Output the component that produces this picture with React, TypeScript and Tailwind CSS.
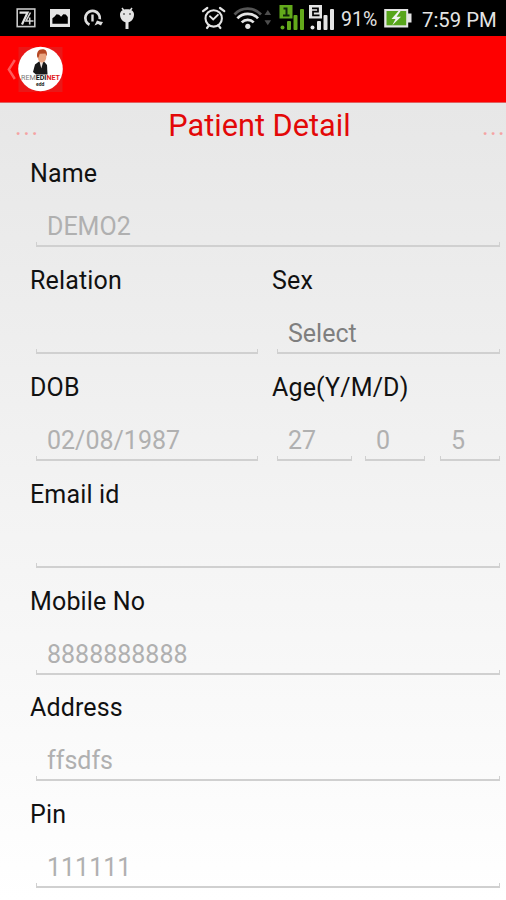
import React from 'react';

interface FieldProps {
  value?: string;
  className?: string;
  dark?: boolean;
}

const Label: React.FC<{ children: React.ReactNode }> = ({ children }) => (
  <div className="h-[44px] leading-[46px] text-[25px] tracking-[0.15px] text-[#111] whitespace-nowrap">{children}</div>
);

// Holo style input: text with a thin bracket line below
const Field: React.FC<FieldProps> = ({ value = '', className = '', dark }) => (
  <div className={`h-[52px] flex flex-col justify-end ${className}`}>
    <div className={`h-[36px] pl-[11px] leading-[42px] text-[25px] whitespace-nowrap ${dark ? 'text-[#7f7f7f]' : 'text-[#b0b0b0]'}`}>
      {value}
    </div>
    <div className="h-[5px] border-x border-b-2 border-[#d0d0d0]"></div>
  </div>
);

const StatusBar: React.FC = () => (
  <div className="h-[36px] bg-black flex items-center text-[#e4e4e4]">
    <svg width="340" height="36" viewBox="0 0 340 36" className="shrink-0">
      {/* App notification */}
      <rect x="17.2" y="9" width="17.6" height="17.6" fill="none" stroke="#c8c8c8" strokeWidth="1.6" />
      <path d="M19.5 12.7h8L22 24.5" fill="none" stroke="#e4e4e4" strokeWidth="2.2" />
      <path d="M30.5 12.5l-4.500 8.500h7.500M29.700 17.500v7" fill="none" stroke="#d4d4d4" strokeWidth="1.6" />
      {/* Picture */}
      <rect x="50" y="9" width="20" height="18" fill="#e4e4e4" />
      <path d="M52.4 23.700v-5.500l2-1.500 2.200-2.500 2.500.5 2 2 2.200-2.500 2.500.3 2 2.500v6.700z" fill="#000" />
      {/* Backup arc */}
      <path d="M89.500 24.800a7.300 7.300 0 1 1 10.300-5.500" fill="none" stroke="#dedede" strokeWidth="2.700" />
      <path d="M92.500 14.500v7" stroke="#dedede" strokeWidth="2.400" />
      <path d="M94.500 25.500l2.500-5 3 1 3 .5-2 3.500-3-1.500z" fill="#dedede" />
      {/* Debugging android */}
      <path d="M122 8l3 4M132 8l-3 4" stroke="#e4e4e4" strokeWidth="1.5" />
      <path d="M120 14.500c0-3.500 3-5.300 7-5.300s7 1.800 7 5.300c0 4-2.700 8-7 8s-7-4-7-8z" fill="#e4e4e4" />
      <circle cx="124" cy="14" r=".9" fill="#555" />
      <circle cx="130" cy="14" r=".9" fill="#555" />
      <path d="M127 21v8" stroke="#e4e4e4" strokeWidth="3" />
      {/* Alarm */}
      <g fill="none" stroke="#e4e4e4" strokeLinecap="round">
        <circle cx="213.7" cy="18.4" r="8.2" strokeWidth="2.1" />
        <path d="M210 16.3l3.2 3.2 4.7-4.7" strokeWidth="1.9" />
        <path d="M203 11.2l4.3-3.2M224.3 11.2L220 8M207 28l2-2.6M220.4 28l-2-2.6" strokeWidth="2.2" />
      </g>
      {/* Wifi */}
      <g fill="none" strokeWidth="2.7">
        <path d="M234.5 14.5a18 18 0 0 1 26.5 0" stroke="#555" />
        <path d="M237.4 18.4a14 14 0 0 1 20.6 0M241.7 22.4a8.5 8.5 0 0 1 12 0" stroke="#e4e4e4" />
      </g>
      <circle cx="247.8" cy="26.3" r="2.6" fill="#e4e4e4" />
      <path d="M264.5 15l3.3-5 3.3 5zM264.5 20.3l3.3 5 3.3-5z" fill="#4d4d4d" />
      {/* SIM 1 */}
      <g fill="#63a91b">
        <rect x="279.5" y="5" width="13" height="13.500" />
        <circle cx="282.500" cy="27.500" r="2" />
        <rect x="287" y="21" width="4" height="9" rx="1" />
        <rect x="293.500" y="15" width="4" height="15" rx="1" />
        <rect x="300" y="9" width="4" height="21" rx="1" />
      </g>
      <path d="M283.500 8.500h3v7M283 15.500h6.500" fill="none" stroke="#10240a" strokeWidth="2" />
      {/* SIM 2 */}
      <g fill="#e4e4e4">
        <rect x="309" y="5" width="13" height="13.500" />
        <circle cx="312.500" cy="27.500" r="2" />
        <rect x="317" y="21" width="4" height="9" rx="1" />
        <rect x="323.500" y="15" width="4" height="15" rx="1" />
        <rect x="330" y="9" width="4" height="21" rx="1" />
      </g>
      <path d="M312 8.300h6v3.400h-5v3.700h6.500" fill="none" stroke="#000" strokeWidth="1.7" />
    </svg>
    <span className="w-[44px] pl-[1px] text-[19.5px] leading-[36px] pt-[3px]">91%</span>
    <svg width="30" height="36" viewBox="384 0 30 36" className="shrink-0">
      <path d="M384.2 9h24v4.5h3.3v9h-3.3v5h-24z" fill="#e4e4e4" />
      <rect x="386.5" y="11" width="19.7" height="14.3" fill="#57a51b" />
      <path d="M398.5 11l-7 8h4l-3.2 6.2 8.7-8.5h-4.4l4-5.7z" fill="#f2f2f2" />
    </svg>
    <span className="pl-[8px] text-[20.3px] leading-[36px] pt-[3px] whitespace-nowrap">7:59 PM</span>
  </div>
);

const ActionBar: React.FC = () => (
  <div className="h-[67px] bg-[#fe0000] border-b border-[#e06060]">
    <svg width="70" height="66" viewBox="0 36 70 66">
      <path d="M14.8 60L8.8 69.5l6 9.5" fill="none" stroke="#ff5a5a" strokeWidth="2.4" />
      <rect x="18.5" y="47" width="44" height="45" fill="#ea1717" />
      <circle cx="40.5" cy="69" r="22.3" fill="#fff" />
      {/* Figure in a suit */}
      <path d="M33 72l2-7.500 4-3h5l3 3.500.5 9.500H36z" fill="#181818" />
      <path d="M39.5 61.5l1.800 7 2-7z" fill="#f1e4de" />
      <ellipse cx="42" cy="57" rx="4.3" ry="5.6" fill="#e9a581" />
      <path d="M37.3 57.500c-1-5 1-8.200 5-8.200s5.300 2.700 4.400 7l-1.500-2.800-5.500.2-1.200 3.800z" fill="#b64824" />
      <text x="21" y="79.500" fontSize="7.6" fontWeight="700" textLength="39" lengthAdjust="spacingAndGlyphs" fontFamily="Roboto, sans-serif">
        <tspan fill="#777" fontWeight="400">REM</tspan>
        <tspan fill="#111">EDI</tspan>
        <tspan fill="#e21a1a">NET</tspan>
      </text>
      <text x="36" y="86.3" fontSize="5" fontWeight="700" fill="#222" fontFamily="Roboto, sans-serif">edd</text>
    </svg>
  </div>
);

const App: React.FC = () => {
  return (
    <div className="w-[506px] h-[900px] overflow-hidden bg-white font-[Roboto,sans-serif]">
      <StatusBar />
      <ActionBar />
      <main className="h-[797px] bg-linear-to-b from-[#e7e7e7] to-white">
        {/* Pager title strip */}
        <div className="h-[48px] flex justify-between text-[#f5a3a3] text-[25px] leading-[48px]">
          <span className="w-[80px] pl-[15px] tracking-[1.7px]">...</span>
          <h1 className="text-[30.7px] leading-[46px] text-[#e30808]">Patient Detail</h1>
          <span className="w-[67px] pl-[43px] tracking-[1.4px] whitespace-nowrap">...</span>
        </div>

        <div className="pl-[30px]">
          <div className="h-[106.9px]">
            <Label>Name</Label>
            <Field value="DEMO2" className="ml-[6px] w-[464px]" />
          </div>
          <div className="h-[106.9px] flex">
            <div className="w-[242px]">
              <Label>Relation</Label>
              <Field className="ml-[6px] w-[222px]" />
            </div>
            <div>
              <Label>Sex</Label>
              <Field value="Select" dark className="ml-[5px] w-[223px]" />
            </div>
          </div>
          <div className="h-[106.9px] flex">
            <div className="w-[242px]">
              <Label>DOB</Label>
              <Field value="02/08/1987" className="ml-[6px] w-[222px]" />
            </div>
            <div>
              <Label>Age(Y/M/D)</Label>
              <div className="ml-[5px] flex">
                <Field value="27" className="w-[75px]" />
                <Field value="0" className="ml-[13px] w-[60px]" />
                <Field value="5" className="ml-[15px] w-[60px]" />
              </div>
            </div>
          </div>
          <div className="h-[106.9px]">
            <Label>Email id</Label>
            <Field className="ml-[6px] w-[464px]" />
          </div>
          <div className="h-[106.9px]">
            <Label>Mobile No</Label>
            <Field value="8888888888" className="ml-[6px] w-[464px]" />
          </div>
          <div className="h-[106.9px]">
            <Label>Address</Label>
            <Field value="ffsdfs" className="ml-[6px] w-[464px]" />
          </div>
          <div className="h-[106.9px]">
            <Label>Pin</Label>
            <Field value="111111" className="ml-[6px] w-[464px]" />
          </div>
        </div>
      </main>
    </div>
  );
};

export default App;
